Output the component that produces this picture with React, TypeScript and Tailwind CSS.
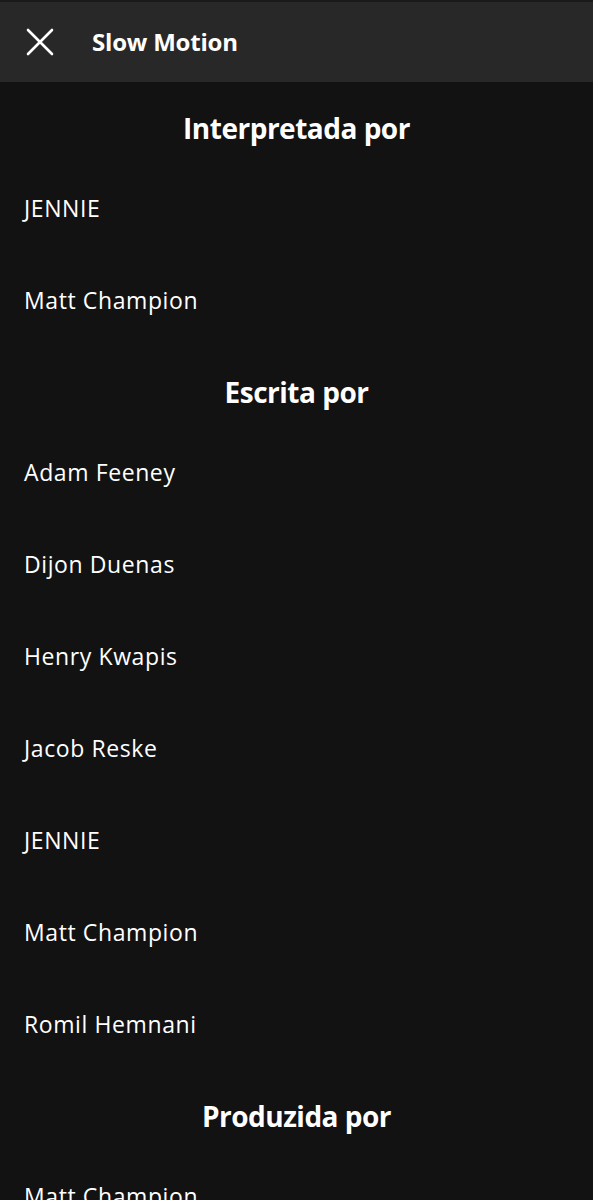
const sections: { title: string; names: string[] }[] = [
  { title: "Interpretada por", names: ["JENNIE", "Matt Champion"] },
  {
    title: "Escrita por",
    names: [
      "Adam Feeney",
      "Dijon Duenas",
      "Henry Kwapis",
      "Jacob Reske",
      "JENNIE",
      "Matt Champion",
      "Romil Hemnani",
    ],
  },
  { title: "Produzida por", names: ["Matt Champion"] },
];

function CloseIcon() {
  return (
    <svg width="28" height="28" viewBox="0 0 28 28" fill="none">
      <path
        d="M2 2L26 26M26 2L2 26"
        stroke="white"
        strokeWidth="2.6"
        strokeLinecap="round"
      />
    </svg>
  );
}

function App() {
  return (
    <div
      className="h-screen overflow-hidden bg-[#121212] text-white"
      style={{ fontFamily: "'Open Sans', 'Noto Sans', sans-serif" }}
    >
      {/* Header */}
      <div className="h-[82px] bg-[#282828] border-t-2 border-[#1a1a1a] flex items-center pl-[26px]">
        <CloseIcon />
        <span className="ml-[38px] text-[24px] font-bold tracking-[-0.2px]">
          Slow Motion
        </span>
      </div>

      {/* Credits */}
      <div>
        {sections.map((section) => (
          <div key={section.title}>
            <h2 className="h-[80px] pt-[28px] text-center text-[28px] font-bold tracking-[-0.5px] leading-[36px]">
              {section.title}
            </h2>
            {section.names.map((name, i) => (
              <div
                key={section.title + i}
                className="h-[92px] pl-6 flex items-center text-[23px] tracking-[0.6px] leading-[30px]"
              >
                {name}
              </div>
            ))}
          </div>
        ))}
      </div>
    </div>
  );
}

export default App;
